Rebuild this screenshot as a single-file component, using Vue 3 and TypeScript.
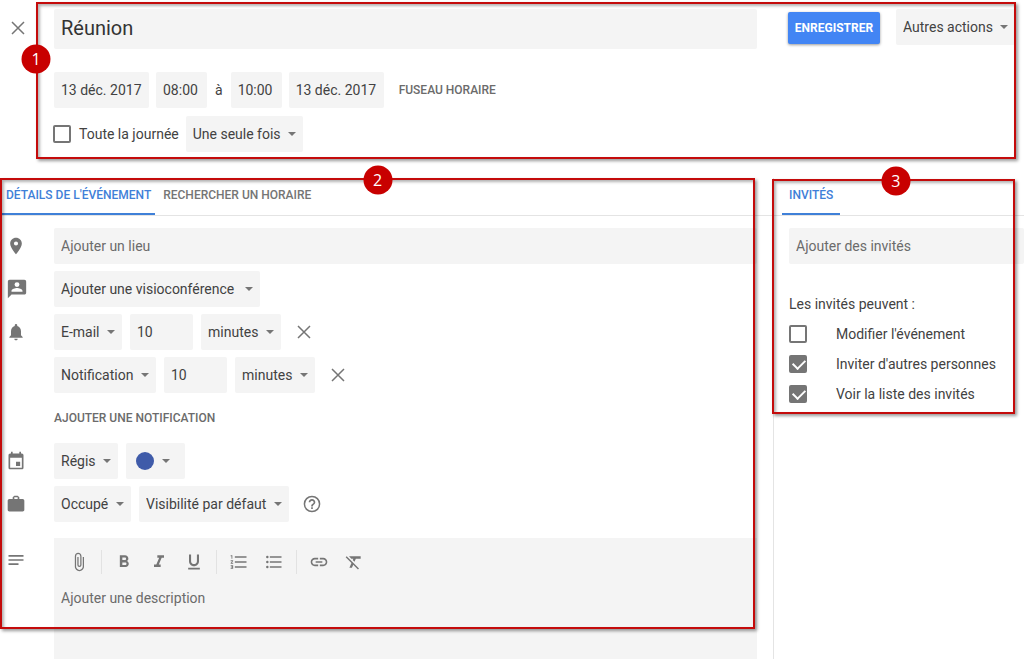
<script setup lang="ts">
import { reactive, ref } from 'vue'

interface Reminder {
  kind: string
  amount: string
  unit: string
}

interface Permission {
  id: string
  label: string
  allowed: boolean
}

const title = ref('Réunion')
const startDate = ref('13 déc. 2017')
const startTime = ref('08:00')
const endTime = ref('10:00')
const endDate = ref('13 déc. 2017')
const allDay = ref(false)
const place = ref('')
const guest = ref('')
const description = ref('')

const reminders = reactive<Reminder[]>([
  { kind: 'E-mail', amount: '10', unit: 'minutes' },
  { kind: 'Notification', amount: '10', unit: 'minutes' },
])

const permissions = reactive<Permission[]>([
  { id: 'edit', label: "Modifier l'événement", allowed: false },
  { id: 'invite', label: "Inviter d'autres personnes", allowed: true },
  { id: 'list', label: 'Voir la liste des invités', allowed: true },
])

const tools: { name: string; path: string }[][] = [
  [
    {
      name: 'Joindre un fichier',
      path: 'M16.5 6v11.5c0 2.21-1.79 4-4 4s-4-1.79-4-4V5a2.5 2.5 0 0 1 5 0v10.5c0 .55-.45 1-1 1s-1-.45-1-1V6H10v9.5a2.5 2.5 0 0 0 5 0V5c0-2.21-1.79-4-4-4S7 2.79 7 5v12.500c0 3.040 2.460 5.500 5.500 5.500s5.500-2.460 5.500-5.500V6h-1.500z',
    },
  ],
  [
    {
      name: 'Gras',
      path: 'M15.600 10.790c.97-.67 1.650-1.770 1.650-2.790 0-2.260-1.750-4-4-4H7v14h7.040c2.090 0 3.710-1.700 3.710-3.790 0-1.520-.86-2.820-2.150-3.420zM10 6.500h3c.83 0 1.500.67 1.500 1.500s-.67 1.500-1.500 1.500h-3v-3zm3.500 9H10v-3h3.500c.83 0 1.500.67 1.500 1.500s-.67 1.500-1.500 1.500z',
    },
    { name: 'Italique', path: 'M10 4v3h2.210l-3.420 8H6v3h8v-3h-2.210l3.420-8H18V4z' },
    {
      name: 'Souligné',
      path: 'M12 17c3.310 0 6-2.690 6-6V3h-2.500v8c0 1.930-1.570 3.500-3.500 3.500S8.500 12.930 8.500 11V3H6v8c0 3.310 2.690 6 6 6zm-7 2v2h14v-2H5z',
    },
  ],
  [
    {
      name: 'Liste numérotée',
      path: 'M2 17h2v.5H3v1h1v.5H2v1h3v-4H2v1zm1-9h1V4H2v1h1v3zm-1 3h1.800L2 13.100v.9h3v-1H3.200L5 10.900V10H2v1zm5-6v2h14V5H7zm0 14h14v-2H7v2zm0-6h14v-2H7v2z',
    },
    {
      name: 'Liste à puces',
      path: 'M4 10.500a1.500 1.500 0 1 0 0 3 1.500 1.500 0 0 0 0-3zm0-6a1.500 1.500 0 1 0 0 3 1.500 1.500 0 0 0 0-3zm0 12a1.500 1.500 0 1 0 0 3 1.500 1.500 0 0 0 0-3zM7 19h14v-2H7v2zm0-6h14v-2H7v2zm0-8v2h14V5H7z',
    },
  ],
  [
    {
      name: 'Insérer un lien',
      path: 'M3.900 12c0-1.710 1.390-3.100 3.100-3.100h4V7H7c-2.760 0-5 2.240-5 5s2.240 5 5 5h4v-1.900H7c-1.710 0-3.100-1.390-3.100-3.100zM8 13h8v-2H8v2zm9-6h-4v1.900h4c1.710 0 3.100 1.390 3.100 3.100s-1.390 3.100-3.100 3.100h-4V17h4c2.760 0 5-2.240 5-5s-2.240-5-5-5z',
    },
    {
      name: 'Supprimer la mise en forme',
      path: 'M3.270 5L2 6.270l6.970 6.970L6.500 19h3l1.570-3.660L16.730 21 18 19.730 3.550 5.270 3.270 5zM6 5v.18L8.820 8h2.400l-.72 1.680 2.100 2.100L14.210 8H20V5H6z',
    },
  ],
]

function removeReminder(index: number) {
  reminders.splice(index, 1)
}

function addReminder() {
  reminders.push({ kind: 'Notification', amount: '10', unit: 'minutes' })
}
</script>

<template>
  <div class="page">
    <header class="header">
      <div class="title-row">
        <button class="close" type="button" aria-label="Fermer">
          <svg viewBox="0 0 14 14" width="14" height="14"><path d="M1 1l12 12M13 1L1 13" class="cross" /></svg>
        </button>
        <input v-model="title" class="field title" type="text" aria-label="Titre" />
        <button class="save" type="button">ENREGISTRER</button>
        <span class="select">
          <select aria-label="Autres actions"><option>Autres actions</option></select>
          <i class="arrow"></i>
        </span>
      </div>
      <div class="line dates">
        <input v-model="startDate" class="field date" type="text" aria-label="Date de début" />
        <input v-model="startTime" class="field time" type="text" aria-label="Heure de début" />
        <span class="to">à</span>
        <input v-model="endTime" class="field time" type="text" aria-label="Heure de fin" />
        <input v-model="endDate" class="field date" type="text" aria-label="Date de fin" />
        <button class="text-button zone" type="button">FUSEAU HORAIRE</button>
      </div>
      <div class="line">
        <label class="all-day"><input v-model="allDay" class="check" type="checkbox" />Toute la journée</label>
        <span class="select">
          <select aria-label="Récurrence"><option>Une seule fois</option></select>
          <i class="arrow"></i>
        </span>
      </div>
      <div class="callout callout-header"><span class="badge">1</span></div>
    </header>

    <main class="body">
      <section class="details">
        <div class="tabs" role="tablist">
          <button class="tab first active" type="button" role="tab" aria-selected="true">DÉTAILS DE L'ÉVÉNEMENT</button>
          <button class="tab" type="button" role="tab" aria-selected="false">RECHERCHER UN HORAIRE</button>
        </div>
        <div class="rows">
          <div class="row">
            <svg class="icon" viewBox="0 0 24 24"><path d="M12 2C8.130 2 5 5.130 5 9c0 5.250 7 13 7 13s7-7.750 7-13c0-3.870-3.130-7-7-7zm0 9.500a2.500 2.500 0 0 1 0-5 2.500 2.500 0 0 1 0 5z" /></svg>
            <input v-model="place" class="field place" type="text" placeholder="Ajouter un lieu" aria-label="Lieu" />
          </div>
          <div class="row">
            <svg class="icon large" viewBox="0 0 24 24"><path fill-rule="evenodd" d="M20 2H4c-1.100 0-2 .9-2 2v18l4-4h14c1.100 0 2-.9 2-2V4c0-1.100-.9-2-2-2zm-8 2.500a2.700 2.700 0 1 1 0 5.400 2.700 2.700 0 0 1 0-5.400zM18 15H6v-.9c0-2 4-3.100 6-3.100s6 1.100 6 3.100v.9z" /></svg>
            <span class="select roomy">
              <select aria-label="Visioconférence"><option>Ajouter une visioconférence</option></select>
              <i class="arrow"></i>
            </span>
          </div>
          <div v-for="(reminder, index) in reminders" :key="index" class="row">
            <svg v-if="index === 0" class="icon" viewBox="0 0 24 24"><path d="M12 22c1.100 0 2-.9 2-2h-4c0 1.100.89 2 2 2zm6-6v-5c0-3.070-1.640-5.640-4.500-6.320V4a1.500 1.500 0 0 0-3 0v.68C7.630 5.360 6 7.920 6 11v5l-2 2v1h16v-1l-2-2z" /></svg>
            <span v-else class="icon"></span>
            <span class="select">
              <select aria-label="Type de rappel"><option>{{ reminder.kind }}</option></select>
              <i class="arrow"></i>
            </span>
            <input v-model="reminder.amount" class="field amount" type="text" aria-label="Délai" />
            <span class="select">
              <select aria-label="Unité"><option>{{ reminder.unit }}</option></select>
              <i class="arrow"></i>
            </span>
            <button class="remove" type="button" aria-label="Supprimer la notification" @click="removeReminder(index)">
              <svg viewBox="0 0 14 14" width="14" height="14"><path d="M1 1l12 12M13 1L1 13" class="cross" /></svg>
            </button>
          </div>
          <div class="row">
            <span class="icon"></span>
            <button class="text-button" type="button" @click="addReminder">AJOUTER UNE NOTIFICATION</button>
          </div>
          <div class="row">
            <svg class="icon" viewBox="0 0 24 24"><path fill-rule="evenodd" d="M18 3h1c1.100 0 2 .9 2 2v15c0 1.100-.9 2-2 2H5c-1.100 0-2-.9-2-2V5c0-1.100.9-2 2-2h1V1h2v2h8V1h2v2zM5 8v12h14V8H5zm7 5h5v5h-5v-5z" /></svg>
            <span class="select">
              <select aria-label="Agenda"><option>Régis</option></select>
              <i class="arrow"></i>
            </span>
            <button class="colour" type="button" aria-label="Couleur" aria-haspopup="listbox">
              <span class="dot"></span><i class="triangle"></i>
            </button>
          </div>
          <div class="row">
            <svg class="icon" viewBox="0 0 24 24"><path fill-rule="evenodd" d="M20 6h-4V4l-2-2h-4L8 4v2H4c-1.100 0-2 .9-2 2v11c0 1.100.9 2 2 2h16c1.100 0 2-.9 2-2V8c0-1.100-.9-2-2-2zm-6 0h-4V4h4v2z" /></svg>
            <span class="select">
              <select aria-label="Disponibilité"><option>Occupé</option></select>
              <i class="arrow"></i>
            </span>
            <span class="select">
              <select aria-label="Visibilité"><option>Visibilité par défaut</option></select>
              <i class="arrow"></i>
            </span>
            <button class="remove" type="button" aria-label="Aide">
              <svg viewBox="0 0 24 24" width="20" height="20"><path d="M11 18h2v-2h-2v2zm1-16a10 10 0 1 0 0 20 10 10 0 0 0 0-20zm0 18.200a8.200 8.200 0 1 1 0-16.400 8.200 8.200 0 0 1 0 16.400zM12 6c-2.210 0-4 1.790-4 4h2c0-1.100.9-2 2-2s2 .9 2 2c0 2-3 1.750-3 5h2c0-2.250 3-2.500 3-5 0-2.210-1.790-4-4-4z" /></svg>
            </button>
          </div>
          <div class="row description-row">
            <svg class="icon lines" viewBox="0 0 24 24"><path d="M3 18h12v-2H3v2zM3 6v2h18V6H3zm0 7h18v-2H3v2z" /></svg>
            <div class="editor">
              <div class="toolbar" role="toolbar" aria-label="Mise en forme">
                <div v-for="(group, g) in tools" :key="g" class="group">
                  <button v-for="tool in group" :key="tool.name" class="tool" type="button" :aria-label="tool.name">
                    <svg viewBox="0 0 24 24" width="20" height="20"><path :d="tool.path" /></svg>
                  </button>
                </div>
              </div>
              <textarea v-model="description" placeholder="Ajouter une description" aria-label="Description"></textarea>
            </div>
          </div>
        </div>
        <div class="callout callout-details"><span class="badge">2</span></div>
      </section>

      <aside class="guests">
        <div class="guest-block">
          <div class="tabs guest-tabs" role="tablist">
            <button class="tab guest-tab active" type="button" role="tab" aria-selected="true">INVITÉS</button>
          </div>
          <div class="guest-content">
            <input v-model="guest" class="field guest-input" type="text" placeholder="Ajouter des invités" aria-label="Invités" />
            <p class="can">Les invités peuvent :</p>
            <label v-for="permission in permissions" :key="permission.id" class="permission">
              <input v-model="permission.allowed" class="check" type="checkbox" />{{ permission.label }}
            </label>
          </div>
          <div class="callout callout-guests"><span class="badge">3</span></div>
        </div>
      </aside>
    </main>
  </div>
</template>

<style>
body {
  margin: 0;
  background: #fff;
}
</style>

<style scoped>
.page,
.page * {
  box-sizing: border-box;
}
.page {
  display: flex;
  flex-direction: column;
  min-height: 100vh;
  overflow: hidden;
  color: #424242;
  font: 14px/20px Roboto, "Liberation Sans", sans-serif;
}
button,
input,
select,
textarea {
  margin: 0;
  padding: 0;
  border: 0;
  border-radius: 0;
  background: none;
  color: inherit;
  font: inherit;
  outline: none;
}
button {
  cursor: pointer;
}
svg {
  display: block;
  fill: #757575;
}
.cross {
  fill: none;
  stroke: #757575;
  stroke-width: 1.5;
}
.header {
  position: relative;
  padding: 9px 9px 26px 0;
}
.title-row {
  display: flex;
  align-items: flex-start;
}
.close {
  display: flex;
  justify-content: center;
  align-items: center;
  flex: none;
  width: 36px;
  height: 38px;
  margin-right: 18px;
}
.field {
  height: 36px;
  padding: 0 7px;
  border-radius: 2px;
  background: #f4f4f4;
}
.field::placeholder,
textarea::placeholder {
  color: #6b6b6b;
  opacity: 1;
}
.title {
  flex: 1;
  min-width: 0;
  height: 40px;
  padding-bottom: 2px;
  color: #333;
  font-size: 20px;
}
.save {
  flex: none;
  width: 92px;
  height: 32px;
  margin: 3px 16px 0 31px;
  border-radius: 2px;
  background: #4285f4;
  box-shadow: 0 1px 3px rgba(0, 0, 0, 0.4);
  color: #fff;
  font-size: 12px;
  font-weight: 700;
}
.select {
  position: relative;
  display: inline-block;
  flex: none;
}
.select select {
  display: block;
  height: 36px;
  padding: 0 22px 0 7px;
  border-radius: 2px;
  background: #f4f4f4;
  appearance: none;
}
.select.roomy select {
  padding-right: 25px;
}
.arrow {
  position: absolute;
  top: 16px;
  right: 7px;
  border: 4px solid transparent;
  border-top-color: #757575;
  border-bottom: 0;
  pointer-events: none;
}
.triangle {
  border: 4px solid transparent;
  border-top-color: #757575;
  border-bottom: 0;
}
.line {
  display: flex;
  align-items: center;
  gap: 7px;
  margin-top: 8px;
  padding-left: 53px;
}
.dates {
  margin-top: 23px;
  padding-left: 54px;
}
.date {
  width: 95px;
}
.time {
  width: 51px;
}
.to {
  padding: 0 1px;
}
.text-button {
  color: #6b6b6b;
  font-size: 12px;
  font-weight: 500;
}
.zone {
  margin-left: 8px;
}
.all-day {
  display: flex;
  align-items: center;
  gap: 8px;
}
.check {
  position: relative;
  flex: none;
  width: 18px;
  height: 18px;
  border: 2px solid #757575;
  border-radius: 2px;
  background: #fff;
  appearance: none;
}
.check:checked {
  background: #757575;
}
.check:checked::after {
  content: "";
  position: absolute;
  top: 0;
  left: 4px;
  width: 6px;
  height: 10px;
  border: solid #fff;
  border-width: 0 2px 2px 0;
  transform: rotate(45deg);
}
.body {
  display: grid;
  flex: 1;
  grid-template-columns: minmax(0, 1fr) 251px;
}
.details {
  position: relative;
  display: flex;
  flex-direction: column;
}
.tabs {
  display: flex;
  height: 38px;
  padding-left: 2px;
  border-bottom: 1px solid #e4e4e4;
}
.tab {
  height: 37px;
  padding: 0 8px 2px;
  border-bottom: 2px solid transparent;
  color: #757575;
  font-size: 12px;
  font-weight: 500;
}
.tab.first {
  padding-right: 4px;
  padding-left: 4px;
}
.tab.active {
  border-bottom-color: #3f80d8;
  color: #3f80d8;
}
.rows {
  display: flex;
  flex: 1;
  flex-direction: column;
  gap: 7px;
  padding: 12px 16px 0 6px;
}
.row {
  display: flex;
  align-items: center;
  gap: 8px;
  min-height: 36px;
}
.icon {
  flex: none;
  width: 20px;
  height: 20px;
  margin-right: 20px;
}
.icon.large {
  width: 22px;
  height: 22px;
  margin-right: 18px;
}
.place {
  flex: 1;
}
.amount {
  width: 63px;
}
.remove {
  display: flex;
  justify-content: center;
  align-items: center;
  width: 30px;
  height: 36px;
}
.colour {
  display: flex;
  align-items: center;
  gap: 8px;
  width: 59px;
  height: 36px;
  padding-left: 10px;
  border-radius: 2px;
  background: #f4f4f4;
}
.dot {
  width: 18px;
  height: 18px;
  border-radius: 50%;
  background: #3f5ba9;
}
.description-row {
  flex: 1;
  align-items: stretch;
  margin-top: 9px;
}
.icon.lines {
  margin-top: 12px;
}
.editor {
  display: flex;
  flex: 1;
  flex-direction: column;
  background: #f4f4f4;
}
.toolbar {
  display: flex;
  padding: 12px 0 0 7px;
}
.group {
  display: flex;
}
.group + .group {
  margin-left: 5px;
  padding-left: 4px;
  border-left: 1px solid #e2e2e2;
}
.tool {
  display: flex;
  justify-content: center;
  align-items: center;
  width: 35px;
  height: 24px;
}
textarea {
  flex: 1;
  padding: 14px 7px;
  resize: none;
}
.guests {
  border-left: 1px solid #e4e4e4;
}
.guest-block {
  position: relative;
}
.guest-tabs {
  padding-left: 8px;
}
.guest-tab {
  padding-right: 7px;
  padding-left: 7px;
}
.guest-content {
  padding: 12px 0 5px 15px;
}
.guest-input {
  display: block;
  width: 100%;
}
.can {
  margin: 30px 0 5px;
}
.permission {
  display: flex;
  align-items: center;
  gap: 29px;
  height: 30px;
}
.callout {
  position: absolute;
  border: 2px solid #c40b0b;
  box-shadow: 2px 2px 3px rgba(0, 0, 0, 0.4), inset 2px 2px 3px rgba(0, 0, 0, 0.3);
  pointer-events: none;
}
.callout-header {
  top: 2px;
  right: 8px;
  bottom: 19px;
  left: 36px;
}
.callout-details {
  top: 0;
  right: 18px;
  bottom: 30px;
  left: 0;
}
.callout-guests {
  top: 1px;
  right: 9px;
  bottom: 0;
  left: -2px;
}
.badge {
  position: absolute;
  top: 0;
  left: 50%;
  width: 29px;
  height: 29px;
  border-radius: 50%;
  background: #c80000;
  color: #fff;
  font: 16px/28px "Open Sans", "Noto Sans", sans-serif;
  text-align: center;
  transform: translate(-50%, -50%);
}
.callout-header .badge {
  top: 55px;
  left: -2px;
}
.callout-guests .badge {
  left: 51%;
}
</style>
